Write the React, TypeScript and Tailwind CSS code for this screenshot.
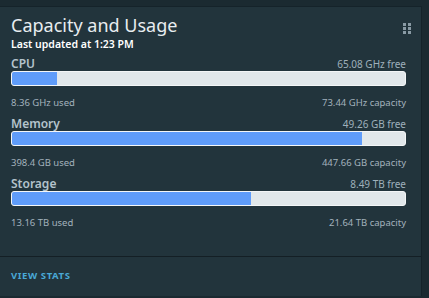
import React from "react";

type Row = {
  label: string;
  free: string;
  used: string;
  capacity: string;
  pct: number;
};

const rows: Row[] = [
  { label: "CPU", free: "65.08 GHz free", used: "8.36 GHz used", capacity: "73.44 GHz capacity", pct: 11.4 },
  { label: "Memory", free: "49.26 GB free", used: "398.4 GB used", capacity: "447.66 GB capacity", pct: 89 },
  { label: "Storage", free: "8.49 TB free", used: "13.16 TB used", capacity: "21.64 TB capacity", pct: 60.8 },
];

const Grip = () => (
  <svg width="8" height="11" viewBox="0 0 8 11" className="text-[#8a9ba5]">
    {[0, 4, 8].map((y) =>
      [0, 5].map((x) => <rect key={`${x}-${y}`} x={x} y={y} width="3" height="3" fill="currentColor" />)
    )}
  </svg>
);

const App = () => {
  return (
    <div
      className="w-[429px] h-[298px] bg-[#1b2a31] pt-[6px] pr-[7px] overflow-hidden"
      style={{ fontFamily: '"Noto Sans", "Open Sans", sans-serif' }}
    >
      <div className="h-[290px] bg-[#22343c] border-t border-r border-[#15232a] flex flex-col">
        <div className="flex-1 px-[11px] pt-[6px]">
          <div className="flex justify-between items-start">
            <h2 className="text-[18px] leading-[24px] text-[#e8edf0] font-normal">Capacity and Usage</h2>
            <div className="mt-[10px] mr-[-1px]">
              <Grip />
            </div>
          </div>
          <p className="text-[10.5px] leading-[14px] font-semibold text-white">
            Last updated at 1:23 PM
          </p>
          <div className="flex flex-col gap-[8px] mt-[6px] pr-[4px]">
            {rows.map((r) => (
              <div key={r.label}>
                <div className="flex justify-between items-end">
                  <span className="text-[12px] leading-[14px] font-semibold text-[#b4c3cc]">{r.label}</span>
                  <span className="text-[10px] leading-[14px] text-[#9fb0bb]">{r.free}</span>
                </div>
                <div className="h-[15px] bg-[#e1e7ea] border border-[#f4f6f7] rounded-[3px] overflow-hidden">
                  <div className="h-full bg-[#5f9cfa]" style={{ width: `${r.pct}%` }} />
                </div>
                <div className="flex justify-between mt-[11px] text-[9.5px] leading-[12px] text-[#a3b2bc]">
                  <span>{r.used}</span>
                  <span>{r.capacity}</span>
                </div>
              </div>
            ))}
          </div>
        </div>
        <div className="h-[40px] border-t border-[#141f25] px-[11px] flex items-center">
          <span className="text-[9.5px] font-bold tracking-[0.6px] text-[#49a8d6]">VIEW STATS</span>
        </div>
      </div>
    </div>
  );
};

export default App;
